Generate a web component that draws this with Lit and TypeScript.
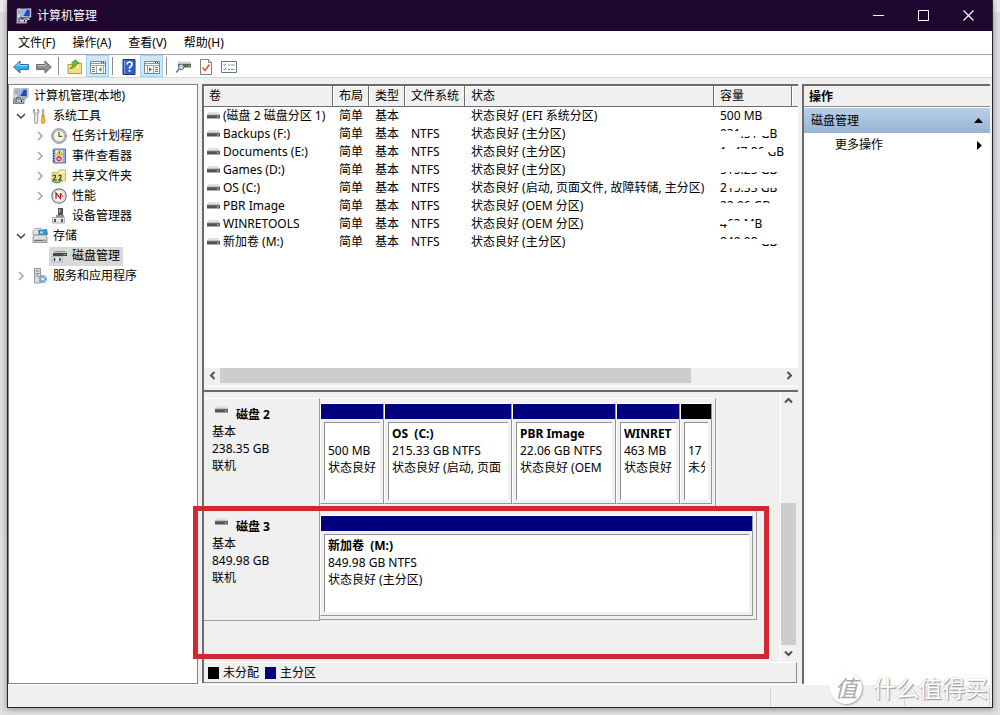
import { LitElement, html, css, nothing, TemplateResult } from "lit";
import { customElement, property } from "lit/decorators.js";
import { styleMap } from "lit/directives/style-map.js";
import { classMap } from "lit/directives/class-map.js";

const icons: Record<string, TemplateResult> = {
  computer: html`<svg width="16" height="16" viewBox="0 0 16 16" aria-hidden="true">
    <path d="M1 1l4-1v11H1z" fill="#d8dce4" stroke="#8a8f9c" stroke-width=".7"/><path d="M2 3h2M2 5h2" stroke="#6a7080"/>
    <path d="M5 1l10-.6V9.5L5 9z" fill="#dfe6f2" stroke="#7d88a4" stroke-width=".7"/>
    <path d="M6.2 2l7.6-.5v7L6.2 8z" fill="#2444b4"/><path d="M6.2 2l4.500-.3L7.500 8H6.200z" fill="#9db8ee"/>
    <path d="M8 10h5l1 2H8z" fill="#b9c0cc"/>
    <path d="M.5 11h10.500V15.500H.5z" fill="#a5abb3" stroke="#555b66" stroke-width=".7"/><path d="M3.500 11V9.500h4V11" fill="none" stroke="#60656f"/>
    <path d="M1 12.500h10" stroke="#e8eaee" stroke-width=".7"/><path d="M3 12v2M8.500 12v2" stroke="#333"/></svg>`,
  tools: html`<svg width="16" height="16" viewBox="0 0 16 16" aria-hidden="true">
    <path d="M2.500 1v3.500l1.700 1 1.600-1V1C7.500 2 7.700 4.500 5.800 6v8a1.600 1.600 0 0 1-3.200 0V6C.7 4.500.9 2 2.500 1z" fill="#e4e6e8" stroke="#85888d" stroke-width=".8"/>
    <path d="M10.300 1.500h1.600V8h-1.600z" fill="#b9bdc2" stroke="#777" stroke-width=".5"/>
    <path d="M9.600 8h3l-.4 2 .7 1.500V14q0 1.500-1.800 1.500T9.300 14v-2.500l.7-1.500z" fill="#f5bd27" stroke="#b98412" stroke-width=".7"/></svg>`,
  clock: html`<svg width="16" height="16" viewBox="0 0 16 16" aria-hidden="true">
    <circle cx="8" cy="8" r="7.300" fill="#c9cbcf" stroke="#787b82" stroke-width=".9"/><circle cx="8" cy="8" r="5.500" fill="#fcf6df" stroke="#a09c8d" stroke-width=".7"/>
    <path d="M8 4v4.300h3.300" fill="none" stroke="#55585f" stroke-width="1.200"/></svg>`,
  events: html`<svg width="16" height="16" viewBox="0 0 16 16" aria-hidden="true">
    <path d="M2.500 1h12v14h-12z" fill="#8fb0df" stroke="#3a5b95" stroke-width=".8"/><path d="M4.500 2h7v12h-7z" fill="#e9e7e0"/>
    <path d="M1.500 3h2M1.500 5.500h2M1.500 8h2M1.500 10.500h2M1.500 13h2" stroke="#30456d"/>
    <path d="M8.500 2l3 5h-6z" fill="#ffd43c" stroke="#a58210" stroke-width=".5"/><path d="M8.500 3.500v2" stroke="#222" stroke-width=".8"/>
    <circle cx="8" cy="10.800" r="2.700" fill="#d23b3b"/><path d="M6.900 9.700l2.200 2.200m0-2.200l-2.200 2.200" stroke="#fff" stroke-width=".8"/></svg>`,
  share: html`<svg width="16" height="16" viewBox="0 0 16 16" aria-hidden="true">
    <path d="M1 4.500h6l1.500-2.500h6V13H1z" fill="#f7e38c" stroke="#c2a445" stroke-width=".8"/><path d="M9 3h5v2H8z" fill="#fff8d8"/>
    <path d="M2 8q3-2 2.500 1L2.500 12H6M7.500 8q3-2 2.500 1L8 12h3" fill="none" stroke="#1d4a3c" stroke-width="1.200"/>
    <path d="M1 12.500c3 3 7 2.500 9 .5" fill="none" stroke="#4daa4b" stroke-width="1.600"/></svg>`,
  perf: html`<svg width="16" height="16" viewBox="0 0 16 16" aria-hidden="true">
    <circle cx="8" cy="8" r="7.200" fill="#fbfbfb" stroke="#777b82" stroke-width="1.200"/><circle cx="8" cy="8" r="5.600" fill="none" stroke="#c6c8cc" stroke-width=".8"/>
    <path d="M5 11V5l4.500 5.500V5" fill="none" stroke="#ba1f24" stroke-width="1.300"/><path d="M10 5.500l2 3.500" stroke="#ba1f24"/></svg>`,
  device: html`<svg width="16" height="16" viewBox="0 0 16 16" aria-hidden="true">
    <path d="M7 0h5v8H7z" fill="#4c5156"/><path d="M8 1.500h1.500v3H8z" fill="#9ecf9a"/><path d="M5 7h8v3H5z" fill="#90949a"/>
    <path d="M1.500 9.500h12V15h-12z" fill="#e2e4e6" stroke="#9a9da2" stroke-width=".8"/><path d="M4 11v3M11 11v3" stroke="#222" stroke-width="1.500"/></svg>`,
  storage: html`<svg width="16" height="16" viewBox="0 0 16 16" aria-hidden="true">
    <path d="M1 3l2-2.500h6L11 3v4H1z" fill="#dfe3e5" stroke="#888d92" stroke-width=".7"/>
    <path d="M6.500 2.500l8-1 1 5-8 1.500z" fill="#2b9bd0" stroke="#17678f" stroke-width=".7"/><path d="M8 3.500l3-.3v2l-3 .5z" fill="#a7e0f5"/>
    <path d="M1 9l1.500-2h11L15 9v5.500H1z" fill="#dfe3e3" stroke="#81878a" stroke-width=".8"/><path d="M2 12.500h12" stroke="#6d7477" stroke-width="1.500"/><path d="M11 12.500h2" stroke="#64e05c" stroke-width="1.500"/></svg>`,
  diskmgmt: html`<svg width="16" height="16" viewBox="0 0 16 16" aria-hidden="true">
    <path d="M2 5l2-1.500h10L16 5v3H2z" fill="#434a47"/><path d="M2.500 4.500h13" stroke="#bfc5c1"/><path d="M12.500 6.500h2" stroke="#7cd974"/>
    <path d="M1 8.500h10.500V14H1z" fill="#e4e5e7" stroke="#a9acb0" stroke-width=".8"/><path d="M3.500 10v3M9 10v3" stroke="#222" stroke-width="1.300"/></svg>`,
  services: html`<svg width="16" height="16" viewBox="0 0 16 16" aria-hidden="true">
    <path d="M2.500.5h6v14.500h-6z" fill="#d7dde3" stroke="#78838e" stroke-width=".8"/><path d="M3.500 3h4M3.500 5.500h4M3.500 8h4" stroke="#6f8797"/>
    <circle cx="10.800" cy="11" r="3.200" fill="#d9ecf8" stroke="#5a93bb" stroke-width="1.800" stroke-dasharray="1.600 .9"/><circle cx="10.800" cy="11" r="2.300" fill="#b5d5ea" stroke="#5a93bb" stroke-width=".7"/><circle cx="10.800" cy="11" r="1" fill="#fff"/></svg>`,
  back: html`<svg width="16" height="16" viewBox="0 0 16 16" aria-hidden="true">
    <path d="M.6 8l6.400-6v3.500h8.400v5H7V14z" fill="#35aee6" stroke="#1b6295" stroke-width=".9"/><path d="M2.500 7.500L6 4v2.500h8.500" fill="none" stroke="#a5e2fa"/></svg>`,
  forward: html`<svg width="16" height="16" viewBox="0 0 16 16" aria-hidden="true">
    <path d="M15.400 8L9 2v3.500H.6v5H9V14z" fill="#8e8e8e" stroke="#5c5c5c" stroke-width=".9"/><path d="M1.500 6.500h8V4.500" fill="none" stroke="#c6c6c6"/></svg>`,
  up: html`<svg width="16" height="16" viewBox="0 0 16 16" aria-hidden="true">
    <path d="M1 5.500h6l1-1.500h6.500v10.500H1z" fill="#f5dc85" stroke="#b3953e" stroke-width=".9"/><path d="M2 8h12" stroke="#fff0b5"/>
    <path d="M3 9.500C4.500 8 6.500 6 6.500 4H4.500L8.500.8 12 4.500H9.800C9.500 7 7 9.500 3 9.500z" fill="#66bf35" stroke="#33851a" stroke-width=".7"/></svg>`,
  panelLeft: html`<svg width="16" height="16" viewBox="0 0 16 16" aria-hidden="true">
    <path d="M.5 2.500h15v12H.5z" fill="#fff" stroke="#7d858d"/><path d="M1 4.500h14" stroke="#8e98a2"/><path d="M11 3.500h1M13 3.500h1" stroke="#333"/><path d="M1 6.500h14M6.500 7v7M13.500 7v7" stroke="#9ba4ac"/>
    <path d="M2 8.500h3M2 10.500h3M2 12.500h3" stroke="#68737d"/><path d="M11.500 8v5L8.500 10.500z" fill="#3ca534"/></svg>`,
  help: html`<svg width="16" height="16" viewBox="0 0 16 16" aria-hidden="true">
    <path d="M2 .5h12v15H2z" fill="#3862bf" stroke="#1b377f"/><path d="M3.500 1v14" stroke="#7f9ee2"/>
    <path d="M6 5.500Q6 3 8.500 3T11 5.200Q11 6.500 9.500 7.500 8.500 8.200 8.500 9.800" fill="none" stroke="#fff" stroke-width="1.700"/><path d="M7.600 11h1.800v1.800H7.600z" fill="#fff"/></svg>`,
  panelRight: html`<svg width="16" height="16" viewBox="0 0 16 16" aria-hidden="true">
    <path d="M.5 2.500h15v12H.5z" fill="#fff" stroke="#7d858d"/><path d="M1 4.500h14" stroke="#8e98a2"/><path d="M11 3.500h1M13 3.500h1" stroke="#333"/><path d="M1 6.500h14M9.500 7v7M3.500 7v7" stroke="#9ba4ac"/>
    <path d="M11 8.500h3M11 10.500h3M11 12.500h3" stroke="#68737d"/><path d="M5 8v5l3-2.500z" fill="#3ca534"/></svg>`,
  refresh: html`<svg width="16" height="16" viewBox="0 0 16 16" aria-hidden="true">
    <path d="M3 4.500h13v4H3z" fill="#58615d"/><path d="M3 3.500h12.500" stroke="#d0d4d2" stroke-width="2"/><path d="M13 7h2" stroke="#73dc6b"/>
    <circle cx="6.200" cy="8" r="2.700" fill="#c3d7e2" stroke="#687983"/><path d="M4.200 10L1 13.500" stroke="#4b7fa0" stroke-width="1.600"/></svg>`,
  check: html`<svg width="16" height="16" viewBox="0 0 16 16" aria-hidden="true">
    <path d="M2.500.5h8l3 3v12h-11z" fill="#fff" stroke="#7f7f7f"/><path d="M10.500.5v3h3" fill="#eee" stroke="#7f7f7f"/><path d="M4.500 8.500l2.500 3 4.500-6" fill="none" stroke="#dd5b26" stroke-width="1.600"/></svg>`,
  list: html`<svg width="16" height="16" viewBox="0 0 16 16" aria-hidden="true">
    <path d="M.5 2.500h15v11H.5z" fill="#fff" stroke="#6d7680"/><path d="M2.500 5.500l1 1 1.500-2M2.500 9.800l1 1 1.500-2" fill="none" stroke="#2b83c5"/><path d="M7 6h2M10 6h3.500M7 10.500h2M10 10.500h3.500" stroke="#8a929a"/></svg>`,
  drive: html`<svg width="13" height="8" viewBox="0 0 13 8" aria-hidden="true">
    <path d="M1.500 0h10L13 3H0z" fill="#dfe3e0"/><path d="M0 3h13v3.500H0z" fill="#4f5752"/><path d="M0 3h13" stroke="#8f9692" stroke-width=".8"/><path d="M10 4.800h1.500" stroke="#9fe098" stroke-width="1.200"/></svg>`,
};

const arrows: Record<string, TemplateResult> = {
  left: html`<svg width="9" height="9" viewBox="0 0 9 9" aria-hidden="true"><path d="M6.500 1L3 4.500 6.500 8" fill="none" stroke="#505050" stroke-width="2"/></svg>`,
  right: html`<svg width="9" height="9" viewBox="0 0 9 9" aria-hidden="true"><path d="M2.500 1L6 4.500 2.500 8" fill="none" stroke="#505050" stroke-width="2"/></svg>`,
  up: html`<svg width="9" height="9" viewBox="0 0 9 9" aria-hidden="true"><path d="M1 6.500L4.500 3 8 6.500" fill="none" stroke="#505050" stroke-width="2"/></svg>`,
  down: html`<svg width="9" height="9" viewBox="0 0 9 9" aria-hidden="true"><path d="M1 2.500L4.500 6 8 2.500" fill="none" stroke="#505050" stroke-width="2"/></svg>`,
};

const reset = css`
  * { box-sizing: border-box; }
  button { font: inherit; color: inherit; background: none; border: 0; padding: 0; margin: 0; }
  a { color: inherit; text-decoration: none; }
  ul { list-style: none; margin: 0; padding: 0; }
  svg { display: block; flex: none; }
`;

interface Node { label: string; icon: string; open?: boolean; leaf?: boolean; selected?: boolean; children?: Node[]; }

const tree: Node[] = [
  { label: "系统工具", icon: "tools", open: true, children: [
    { label: "任务计划程序", icon: "clock" },
    { label: "事件查看器", icon: "events" },
    { label: "共享文件夹", icon: "share" },
    { label: "性能", icon: "perf" },
    { label: "设备管理器", icon: "device", leaf: true },
  ] },
  { label: "存储", icon: "storage", open: true, children: [
    { label: "磁盘管理", icon: "diskmgmt", leaf: true, selected: true },
  ] },
  { label: "服务和应用程序", icon: "services" },
];

@customElement("console-tree")
export class ConsoleTree extends LitElement {
  static styles = [reset, css`
    :host { display: block; background: #fff; border: 1px solid #828282; padding: 1px 2px; }
    .sub { padding-left: 19px; }
    .row { display: flex; height: 20px; align-items: center; }
    .twist { width: 19px; height: 20px; display: flex; align-items: center; justify-content: center; flex: none; }
    .link { display: flex; align-items: center; gap: 5px; height: 19px; padding: 0 3px 0 2px; white-space: nowrap; }
    .selected { background: #d9d9d9; }
  `];

  node(n: Node): TemplateResult {
    const twist = n.leaf
      ? html`<span class="twist"></span>`
      : html`<button class="twist" aria-label=${(n.open ? "折叠 " : "展开 ") + n.label}>
          <svg width="10" height="10" viewBox="0 0 10 10"><path d=${n.open ? "M1 3l4 4 4-4" : "M3 1l4 4-4 4"} fill="none" stroke=${n.open ? "#404040" : "#a6a6a6"} stroke-width="1.500"/></svg>
        </button>`;
    return html`<li>
      <div class="row">${twist}<a href="#" class=${classMap({ link: true, selected: !!n.selected })}>${icons[n.icon]}<span>${n.label}</span></a></div>
      ${n.children ? html`<ul class="sub">${n.children.map((c) => this.node(c))}</ul>` : nothing}
    </li>`;
  }

  render() {
    return html`<div class="row"><a href="#" class="link">${icons.computer}<span>计算机管理(本地)</span></a></div>
      <ul>${tree.map((n) => this.node(n))}</ul>`;
  }
}

/* Each capacity is a list of pieces; a piece shows whole, only its top, only its foot, or nothing. */
type Piece = [string, "full" | "top" | "foot" | "low" | "none"];
interface Volume { name: string; fs: string; status: string; capacity: Piece[]; }

const volumes: Volume[] = [
  { name: "(磁盘 2 磁盘分区 1)", fs: "", status: "状态良好 (EFI 系统分区)", capacity: [["500 MB", "full"]] },
  { name: "Backups (F:)", fs: "NTFS", status: "状态良好 (主分区)", capacity: [["931", "top"], [".51 ", "foot"], ["G", "foot"], ["B", "full"]] },
  { name: "Documents (E:)", fs: "NTFS", status: "状态良好 (主分区)", capacity: [["1", "top"], ["0", "none"], ["47.86 ", "top"], ["G", "low"], ["B", "full"]] },
  { name: "Games (D:)", fs: "NTFS", status: "状态良好 (主分区)", capacity: [["515.25 GB", "foot"]] },
  { name: "OS (C:)", fs: "NTFS", status: "状态良好 (启动, 页面文件, 故障转储, 主分区)", capacity: [["2", "full"], ["15.33 GB", "low"]] },
  { name: "PBR Image", fs: "NTFS", status: "状态良好 (OEM 分区)", capacity: [["22.06 GB", "top"]] },
  { name: "WINRETOOLS", fs: "NTFS", status: "状态良好 (OEM 分区)", capacity: [["4", "low"], ["63 M", "top"], ["B", "full"]] },
  { name: "新加卷 (M:)", fs: "NTFS", status: "状态良好 (主分区)", capacity: [["849.98 ", "top"], ["GB", "foot"]] },
];

@customElement("volume-list")
export class VolumeList extends LitElement {
  static styles = [reset, css`
    :host { display: flex; flex-direction: column; background: #fff; min-width: 0; }
    .view { flex: 1; overflow: hidden; }
    table { width: 100%; table-layout: fixed; border-collapse: separate; border-spacing: 0; }
    .c-name { width: 129px; } .c-short { width: 36px; } .c-fs { width: 60px; } .c-status { width: 249px; } .c-cap { width: 78px; }
    th { height: 21px; padding: 0 0 0 6px; text-align: left; font-weight: normal; background: #f0f0f0; border-right: 1px solid #6c6c6c; border-bottom: 1px solid #6c6c6c; box-shadow: inset 1px 1px #fff; white-space: nowrap; }
    th:first-child { padding-left: 5px; }
    th:last-child { border-right: 0; }
    td { height: 18px; padding: 0 0 0 6px; line-height: 18px; white-space: nowrap; overflow: hidden; }
    td:first-child { padding-left: 3px; }
    .name { display: flex; align-items: center; gap: 3px; }
    .piece { display: inline-block; white-space: pre; }
    .top { clip-path: inset(0 0 12px 0); }
    .foot { clip-path: inset(11px 0 0 0); }
    .low { clip-path: inset(9px 0 0 0); }
    .none { visibility: hidden; }
    .hbar { display: flex; height: 15px; padding-right: 1px; background: #f0f0f0; }
    .hbar button { width: 16px; display: flex; align-items: center; justify-content: center; }
    .track { flex: 1; display: flex; }
    .thumb { width: 84%; background: #cdcdcd; }
  `];

  render() {
    return html`<div class="view"><table>
      <colgroup><col class="c-name"><col class="c-short"><col class="c-short"><col class="c-fs"><col class="c-status"><col class="c-cap"><col></colgroup>
      <thead><tr><th>卷</th><th>布局</th><th>类型</th><th>文件系统</th><th>状态</th><th>容量</th><th></th></tr></thead>
      <tbody>${volumes.map((v) => html`<tr>
        <td><span class="name">${icons.drive}<span>${v.name}</span></span></td>
        <td>简单</td><td>基本</td><td>${v.fs}</td><td>${v.status}</td>
        <td>${v.capacity.map(([t, m]) => html`<span class="piece ${m}">${t}</span>`)}</td><td></td>
      </tr>`)}</tbody></table></div>
      <div class="hbar"><button aria-label="向左滚动">${arrows.left}</button><div class="track"><div class="thumb"></div></div><button aria-label="向右滚动">${arrows.right}</button></div>`;
  }
}

interface Partition { name: string; size: string; status: string; width: number; free?: boolean; }
interface Disk { name: string; size: string; parts: Partition[]; }

const disks: Disk[] = [
  { name: "磁盘 2", size: "238.35 GB", parts: [
    { name: "", size: "500 MB", status: "状态良好", width: 64 },
    { name: "OS  (C:)", size: "215.33 GB NTFS", status: "状态良好 (启动, 页面", width: 128 },
    { name: "PBR Image", size: "22.06 GB NTFS", status: "状态良好 (OEM", width: 104 },
    { name: "WINRET", size: "463 MB", status: "状态良好", width: 64 },
    { name: "", size: "17", status: "未分", width: 32, free: true },
  ] },
  { name: "磁盘 3", size: "849.98 GB", parts: [
    { name: "新加卷  (M:)", size: "849.98 GB NTFS", status: "状态良好 (主分区)", width: 433 },
  ] },
];

@customElement("disk-map")
export class DiskMap extends LitElement {
  static styles = [reset, css`
    :host { display: block; }
    .pane { display: flex; height: 270px; }
    .disks { position: relative; flex: 1; padding-top: 6px; min-width: 0; }
    .disk { display: flex; height: 112px; align-items: flex-start; }
    .label { width: 116px; height: 111px; flex: none; padding: 7px 0 0 8px; border-top: 1px solid #fff; border-right: 1px solid #9a9a9a; border-bottom: 1px solid #a0a0a0; line-height: 17px; }
    .title { display: flex; gap: 8px; padding-left: 3px; font-weight: bold; }
    .parts { display: flex; height: 110px; padding: 4px 3px 3px 0; border-top: 1px solid #fff; border-right: 1px solid #9a9a9a; border-bottom: 1px solid #9a9a9a; }
    .part { display: flex; flex-direction: column; flex: none; height: 101px; border: 1px solid #969696; border-top-color: #fff; border-left-color: #fff; }
    .bar { height: 15px; background: #000080; }
    .free { background: #000; }
    .info { flex: 1; margin: 3px 3px 3px; padding: 2px 3px 0; background: #fff; border-left: 1px solid #8f8f8f; border-top: 1px solid #8f8f8f; line-height: 17px; overflow: hidden; }
    .line { height: 17px; overflow: hidden; white-space: pre; }
    .strong { font-weight: bold; }
    .vbar { width: 16px; margin-right: 2px; border-left: 1px solid #fff; display: flex; flex-direction: column; }
    .vbar button { height: 17px; display: flex; align-items: center; justify-content: center; }
    .track { flex: 1; display: flex; flex-direction: column; justify-content: flex-end; }
    .thumb { height: 60%; background: #cdcdcd; }
    .legend { display: flex; align-items: center; gap: 4px; height: 21px; margin-right: 1px; padding-left: 4px; border-top: 1px solid #fff; border-right: 1px solid #8a8a8a; border-bottom: 1px solid #8a8a8a; }
    .key { width: 11px; height: 12px; }
    .key + span { margin-right: 2px; }
    .mark { position: absolute; left: -11px; right: 11px; top: 114px; height: 153px; border: 5px solid #d1272f; pointer-events: none; z-index: 2; }
  `];

  render() {
    return html`<div class="pane">
      <div class="disks">
        ${disks.map((d) => html`<div class="disk">
          <div class="label"><div class="title">${icons.drive}<span>${d.name}</span></div><div>基本</div><div>${d.size}</div><div>联机</div></div>
          <div class="parts">${d.parts.map((p) => html`<div class="part" style=${styleMap({ width: p.width + "px" })}>
            <div class=${classMap({ bar: true, free: !!p.free })}></div>
            <div class="info"><div class="line strong">${p.name}</div><div class="line">${p.size}</div><div class="line">${p.status}</div></div>
          </div>`)}</div>
        </div>`)}
        <div class="mark"></div>
      </div>
      <div class="vbar"><button aria-label="向上滚动">${arrows.up}</button><div class="track"><div class="thumb"></div></div><button aria-label="向下滚动">${arrows.down}</button></div>
    </div>
    <div class="legend"><span class="key bar free"></span><span>未分配</span><span class="key bar"></span><span>主分区</span></div>`;
  }
}

@customElement("app-root")
export class AppRoot extends LitElement {
  @property() heading = "计算机管理";

  static styles = [reset, css`
    :host { display: flex; min-height: 100vh; padding: 0 7px 7px; box-sizing: border-box; background: linear-gradient(#ececf0 12px, #dedee0 12px, #e0e0e2); font: 12px/16px "Noto Sans", "Noto Sans CJK SC", sans-serif; color: #000; }
    .window { position: relative; flex: 1; min-width: 0; display: flex; flex-direction: column; background: #f0f0f0; border: 1px solid #24222b; border-top: 0; box-shadow: 0 1px 6px #0006; }
    .titlebar { display: flex; align-items: center; height: 31px; padding: 0 1px 0 8px; gap: 5px; background: #1f062f; color: #fff; }
    .heading { flex: 1; margin: 0; font: inherit; }
    .controls { display: flex; }
    .controls button { width: 45px; height: 31px; display: flex; align-items: center; justify-content: center; }
    .menu { display: flex; gap: 1px; height: 24px; padding-left: 2px; background: #fff; border-bottom: 1px solid #a5a5a5; }
    .menu button { padding: 0 8px; }
    .toolbar { display: flex; align-items: flex-end; height: 23px; padding-left: 1px; background: #fff; border-bottom: 1px solid #d8d8d8; }
    .tool { width: 23px; height: 22px; padding-top: 2px; display: flex; align-items: center; justify-content: center; }
    .on { background: #cce8fb; box-shadow: inset 0 0 0 1px #a4d3f2; }
    .sep { width: 1px; height: 18px; margin: 0 4px 2px 3px; background: #8d8d8d; }
    .body { flex: 1; display: flex; gap: 4px; padding: 6px 2px 0 0; }
    console-tree { flex: 0 0 190px; }
    .center { flex: 1; min-width: 0; display: flex; flex-direction: column; border-left: 2px solid #6b6b6b; border-top: 2px solid #6b6b6b; margin-bottom: 1px; }
    volume-list { flex: 1; }
    .splitter { height: 9px; border-bottom: 2px solid #6b6b6b; background: linear-gradient(#f0f0f0 3px, #fff 3px, #fff 4px, #f0f0f0 4px); }
    .actions { flex: 0 0 188px; background: #fff; border-left: 2px solid #6b6b6b; border-top: 2px solid #6b6b6b; }
    .caption { margin: 0; height: 21px; padding-left: 5px; font: bold 12px/21px "Noto Sans", "Noto Sans CJK SC", sans-serif; background: #f0f0f0; border-bottom: 1px solid #8a8a8a; }
    .group { width: 100%; height: 25px; margin-top: 1px; padding: 0 7px; display: flex; align-items: center; justify-content: space-between; background: linear-gradient(#b9cfe8, #98b4d2); }
    .more { display: flex; height: 24px; align-items: center; justify-content: space-between; padding: 0 8px 0 31px; }
    .status { display: flex; height: 23px; padding: 3px 2px 1px 0; border-top: 1px solid #fff; }
    .status span { border-right: 1px solid #d2d2d2; }
    .wide { flex: 1; } .mid { width: 134px; } .small { width: 85px; }
    .brand { position: absolute; right: 4px; bottom: 3px; display: flex; align-items: center; gap: 11px; z-index: 3; color: #fff; font-size: 23px; line-height: 32px; text-shadow: 1px 1px 1px #999, 0 0 2px #bbb; white-space: nowrap; }
    .seal { width: 32px; height: 32px; border-radius: 50%; background: #fff; color: #aaa; text-align: center; font-style: italic; text-shadow: none; box-shadow: 1px 1px 2px #aaa; }
  `];

  tool(name: string, label: string, on = false) {
    return html`<button class=${classMap({ tool: true, on })} aria-label=${label}>${icons[name]}</button>`;
  }

  render() {
    return html`<div class="window">
      <header class="titlebar">${icons.computer}<h1 class="heading">${this.heading}</h1>
        <div class="controls">
          <button aria-label="最小化"><svg width="11" height="11" viewBox="0 0 11 11"><path d="M0 5.500h11" stroke="#fff"/></svg></button>
          <button aria-label="最大化"><svg width="11" height="11" viewBox="0 0 11 11"><path d="M.5.5h10v10H.5z" fill="none" stroke="#fff"/></svg></button>
          <button aria-label="关闭"><svg width="11" height="11" viewBox="0 0 11 11"><path d="M.5.5l10 10m0-10l-10 10" stroke="#fff" stroke-width="1.200"/></svg></button>
        </div></header>
      <nav class="menu">${["文件(F)", "操作(A)", "查看(V)", "帮助(H)"].map((m) => html`<button>${m}</button>`)}</nav>
      <div class="toolbar">
        ${this.tool("back", "后退")}${this.tool("forward", "前进")}<span class="sep"></span>
        ${this.tool("up", "上移一级")}${this.tool("panelLeft", "显示/隐藏控制台树", true)}<span class="sep"></span>
        ${this.tool("help", "帮助")}${this.tool("panelRight", "显示/隐藏操作窗格", true)}<span class="sep"></span>
        ${this.tool("refresh", "重新扫描磁盘")}${this.tool("check", "属性")}${this.tool("list", "设置")}
      </div>
      <main class="body">
        <console-tree></console-tree>
        <div class="center"><volume-list></volume-list><div class="splitter"></div><disk-map></disk-map></div>
        <aside class="actions">
          <h2 class="caption">操作</h2>
          <button class="group"><span>磁盘管理</span><svg width="9" height="5" viewBox="0 0 9 5"><path d="M0 5l4.500-5L9 5z"/></svg></button>
          <a href="#" class="more"><span>更多操作</span><svg width="5" height="9" viewBox="0 0 5 9"><path d="M0 0l5 4.500L0 9z"/></svg></a>
        </aside>
      </main>
      <footer class="status"><span class="wide"></span><span class="mid"></span><span class="small"></span></footer>
      <div class="brand"><span class="seal">值</span><span>什么值得买</span></div>
    </div>`;
  }
}
